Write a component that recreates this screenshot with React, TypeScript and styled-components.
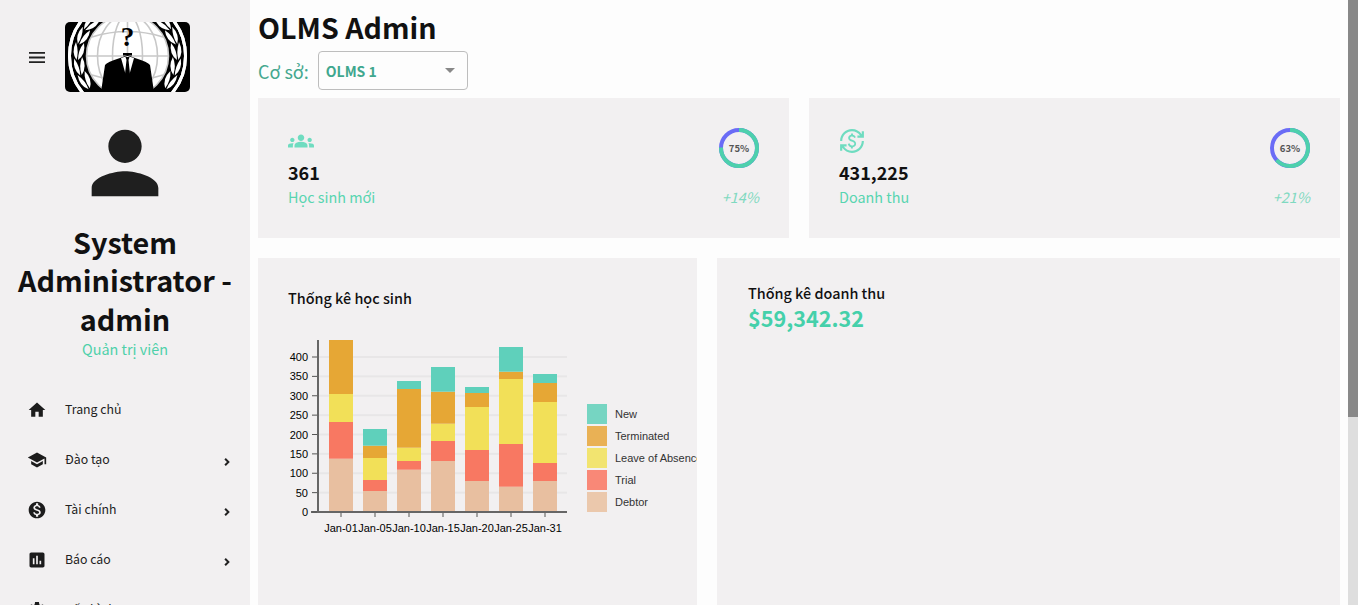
import styled, { createGlobalStyle } from "styled-components";

const FONT = `"Noto Sans CJK SC", "Noto Sans", sans-serif`;

const GlobalStyle = createGlobalStyle`
    html, body {
        margin: 0;
        height: 100%;
        overflow: hidden;
        background: #fdfdfd;
    }
    body {
        font-family: ${FONT};
        color: #111;
    }
`;

const Viewport = styled.div`
    display: flex;
    height: 100vh;
    overflow: hidden;
`;

const Layout = styled.div`
    display: flex;
    flex: 1;
    min-width: 0;
`;

const ScrollTrack = styled.div`
    flex: 0 0 10px;
    background: #dedede;
`;

const ScrollThumb = styled.div`
    height: 417px;
    background: #888;
`;

const Sidebar = styled.aside`
    flex: 0 0 250px;
    background: #f2f0f1;
`;

const SideHead = styled.div`
    display: flex;
    align-items: center;
    height: 70px;
    padding: 22px 0 0 29px;
    gap: 20px;
`;

const Burger = styled.svg`
    width: 16px;
    height: 11px;
    color: #222;
`;

const Logo = styled.svg`
    width: 125px;
    height: 70px;
    border-radius: 5px;
    display: block;
`;

const Profile = styled.div`
    display: flex;
    flex-direction: column;
    align-items: center;
    padding-top: 21px;
`;

const Name = styled.div`
    font-size: 28.8px;
    line-height: 38.4px;
    font-weight: 700;
    text-align: center;
    margin-top: 10px;
`;

const Role = styled.div`
    font-size: 14.4px;
    line-height: 22px;
    color: #4fd0aa;
`;

const Nav = styled.nav`
    padding-top: 25px;
`;

const NavItem = styled.div`
    display: flex;
    align-items: center;
    height: 50px;
    padding-left: 27px;
    font-size: 12.3px;
    color: #222;
`;

const NavIcon = styled.svg`
    flex: 0 0 20px;
    width: 20px;
    height: 20px;
    margin-right: 18px;
    color: #1c1c1c;
`;

const NavLabel = styled.span`
    flex: 1;
    margin-bottom: 2px;
`;

const Chevron = styled.svg`
    width: 6px;
    height: 8px;
    margin: 3px 20px 0 0;
    color: #222;
`;

const Main = styled.main`
    flex: 1;
    min-width: 0;
    padding: 0 8px;
`;

const Title = styled.h1`
    margin: 0;
    padding-top: 8px;
    font-size: 28.6px;
    line-height: 38px;
    font-weight: 700;
`;

const BranchRow = styled.div`
    display: flex;
    align-items: center;
    margin-top: 5px;
    gap: 9px;
    height: 39px;
`;

const BranchLabel = styled.span`
    font-size: 18px;
    color: #45a88f;
`;

const Select = styled.div`
    display: flex;
    align-items: center;
    justify-content: space-between;
    box-sizing: border-box;
    width: 150px;
    height: 39px;
    padding: 0 12px 0 7px;
    border: 1px solid #bdbdbd;
    border-radius: 4px;
    font-size: 14px;
    font-weight: 700;
    color: #40a78e;
`;

const Caret = styled.span`
    width: 0;
    height: 0;
    border-left: 5px solid transparent;
    border-right: 5px solid transparent;
    border-top: 5px solid #888;
`;

const StatRow = styled.div`
    display: grid;
    grid-template-columns: 531px 531px;
    gap: 20px;
    margin-top: 8px;
`;

const StatCard = styled.section`
    display: flex;
    justify-content: space-between;
    box-sizing: border-box;
    height: 140px;
    padding: 30px 29px 0 30px;
    background: #f2f0f1;
`;

const StatIcon = styled.svg`
    display: block;
    width: 26px;
    height: 26px;
    color: #6fdcc0;
`;

const StatValue = styled.div`
    font-size: 18px;
    line-height: 25px;
    font-weight: 700;
    margin-top: 6px;
`;

const StatLabel = styled.div`
    font-size: 14.4px;
    line-height: 24px;
    color: #58d5b0;
`;

const StatSide = styled.div`
    display: flex;
    flex-direction: column;
    align-items: flex-end;
`;

const Ring = styled.svg`
    display: block;
    width: 42px;
    height: 42px;
    margin-top: -1px;
`;

const RingText = styled.text`
    font-family: ${FONT};
    font-size: 9.5px;
    font-weight: 700;
    fill: #555;
`;

const Growth = styled.div`
    font-size: 14.4px;
    line-height: 22px;
    font-style: italic;
    color: #7fd9c0;
    margin: 17px 1px 0 0;
`;

const ChartRow = styled.div`
    display: grid;
    grid-template-columns: 439px 623px;
    gap: 20px;
    margin-top: 20px;
`;

const ChartCard = styled.section<{ $top: number; $left: number }>`
    box-sizing: border-box;
    height: 600px;
    padding: ${({ $top, $left }) => `${$top}px 0 0 ${$left}px`};
    background: #f2f0f1;
    overflow: hidden;
`;

const CardTitle = styled.div`
    font-size: 14.4px;
    line-height: 22px;
    font-weight: 500;
`;

const Amount = styled.div`
    font-size: 21.6px;
    line-height: 28px;
    font-weight: 700;
    color: #45d0aa;
`;

const ChartSvg = styled.svg`
    display: block;
    margin: 21px 0 0 -30px;
    font-family: "Liberation Sans", Arial, sans-serif;
`;

const LogoMark = styled.text`
    font-family: "Liberation Serif", serif;
    font-size: 27px;
    font-weight: 700;
`;

const stackColors = ["#e8bfa0", "#f87862", "#f2e058", "#e6a735", "#5fd0bb"];
const legendColors = ["#76d5c2", "#e9b155", "#f2e470", "#f98877", "#ebc8ac"];
const legendNames = ["New", "Terminated", "Leave of Absence", "Trial", "Debtor"];

// pixel heights measured off the chart, bottom segment first
const bars = [
    { label: "Jan-01", x: 71, tops: [458.7, 422, 394, 340, 340] },
    { label: "Jan-05", x: 105, tops: [491, 480, 458, 445.7, 429] },
    { label: "Jan-10", x: 139, tops: [469.7, 461, 447.7, 389, 381] },
    { label: "Jan-15", x: 173, tops: [461, 441, 423.7, 391.7, 367] },
    { label: "Jan-20", x: 207, tops: [481, 450, 407, 393, 387] },
    { label: "Jan-25", x: 241, tops: [486.7, 444, 379, 371.7, 347] },
    { label: "Jan-31", x: 275, tops: [481, 463, 402, 383, 374] },
];

// svg starts at page y=330 and x=258
const OY = 330;
const ZERO = 512 - OY;
const ticks = [0, 50, 100, 150, 200, 250, 300, 350, 400];

function StudentChart() {
    return (
        <ChartSvg width="439" height="230" viewBox="0 0 439 230">
            {ticks.slice(1).map((t) => (
                <rect key={t} x="60" y={ZERO - t * 0.3875 - 1} width="249" height="2" fill="#e8e6e7" />
            ))}
            {bars.map((b) => (
                <g key={b.label}>
                    {b.tops.map((top, i) => {
                        const bottom = i === 0 ? 512 : b.tops[i - 1];
                        return (
                            <rect
                                key={i}
                                x={b.x}
                                y={top - OY}
                                width="24"
                                height={bottom - top}
                                fill={stackColors[i]}
                            />
                        );
                    })}
                    <rect x={b.x + 11.5} y={ZERO} width="1" height="5" fill="#555" />
                    <text x={b.x + 12} y={ZERO + 20} fontSize="11" textAnchor="middle" fill="#000">
                        {b.label}
                    </text>
                </g>
            ))}
            <rect x="59" y="10" width="2" height={ZERO - 9} fill="#666" />
            <rect x="53" y={ZERO - 1} width="256" height="2" fill="#666" />
            {ticks.map((t) => (
                <g key={t}>
                    <rect x="54" y={ZERO - t * 0.3875 - 0.5} width="5" height="1" fill="#555" />
                    <text x="50" y={ZERO - t * 0.3875 + 4} fontSize="11" textAnchor="end" fill="#000">
                        {t}
                    </text>
                </g>
            ))}
            {legendNames.map((name, i) => (
                <g key={name}>
                    <rect x="329" y={74 + i * 22} width="20" height="20" fill={legendColors[i]} />
                    <text x="357" y={88 + i * 22} fontSize="11" fill="#333">
                        {name}
                    </text>
                </g>
            ))}
        </ChartSvg>
    );
}

function ProgressRing({ value }: { value: number }) {
    const r = 18;
    const c = 2 * Math.PI * r;
    return (
        <Ring viewBox="0 0 42 42">
            <circle cx="21" cy="21" r={r} fill="none" stroke="#6a6cf6" strokeWidth="4" />
            <circle
                cx="21"
                cy="21"
                r={r}
                fill="none"
                stroke="#4dd0ac"
                strokeWidth="4"
                strokeDasharray={`${(c * value) / 100} ${c}`}
                transform="rotate(-90 21 21)"
            />
            <RingText x="21" y="24.5" textAnchor="middle">
                {value}%
            </RingText>
        </Ring>
    );
}

// one half of the wreath, the other half is mirrored around the globe centre
function Wreath() {
    const angles = [-36, -18, 0, 18, 36];
    return (
        <g>
            <circle cx="62.5" cy="34" r="58" fill="none" stroke="#fff" strokeWidth="3" />
            {angles.map((a) => (
                <g key={a} transform={`rotate(${a} 62.5 34)`} fill="#fff">
                    <path d="M11.5 38Q6 30 11 20Q14 30 11.5 38Z" />
                    <path d="M13 38Q21 32 19 21Q13 28 13 38Z" />
                </g>
            ))}
        </g>
    );
}

function AnonLogo() {
    return (
        <Logo viewBox="0 0 125 70">
            <rect width="125" height="70" fill="#000" />
            <Wreath />
            <g transform="matrix(-1 0 0 1 125 0)">
                <Wreath />
            </g>
            <circle cx="62.5" cy="34" r="41" fill="#fff" />
            <g fill="none" stroke="#c8c8c8" strokeWidth="1.6">
                <circle cx="62.5" cy="34" r="41" />
                <ellipse cx="62.5" cy="34" rx="15" ry="41" />
                <ellipse cx="62.5" cy="34" rx="30" ry="41" />
                <path d="M62.5 -7V75M21.5 34H103.5M27 15Q62.5 4 98 15M27 53Q62.5 64 98 53" />
            </g>
            <path d="M36 70L40 43Q42 40 55 36L62.5 33L70 36Q83 40 85 43L89 70Z" fill="#000" />
            <path d="M56 36L62.5 34L69 36L64.5 52H60.5Z" fill="#fff" />
            <path d="M60.5 35H64.5L63.5 38L65 52L62.5 56L60 52L61.5 38Z" fill="#000" />
            <rect x="58" y="31" width="9" height="2.5" fill="#000" />
            <LogoMark x="62.5" y="24" textAnchor="middle" fill="#000">
                ?
            </LogoMark>
        </Logo>
    );
}

const navIcons: Record<string, string> = {
    home: "M10 20v-6h4v6h5v-8h3L12 3 2 12h3v8z",
    school: "M5 13.18v4L12 21l7-3.82v-4L12 17l-7-3.82zM12 3 1 9l11 6 9-4.91V17h2V9L12 3z",
    money:
        "M12 2C6.48 2 2 6.48 2 12s4.48 10 10 10 10-4.48 10-10S17.52 2 12 2zm1.41 16.09V20h-2.67v-1.93c-1.71-.36-3.16-1.46-3.27-3.4h1.96c.1 1.05.82 1.87 2.65 1.87 1.96 0 2.4-.98 2.4-1.59 0-.83-.44-1.61-2.67-2.14-2.48-.6-4.18-1.62-4.18-3.67 0-1.72 1.39-2.84 3.11-3.21V4h2.67v1.95c1.86.45 2.79 1.86 2.85 3.39H14.3c-.05-1.11-.64-1.87-2.22-1.87-1.5 0-2.4.68-2.4 1.64 0 .84.65 1.39 2.67 1.91s4.18 1.39 4.18 3.91c-.01 1.83-1.38 2.83-3.12 3.16z",
    chart:
        "M19 3H5c-1.1 0-2 .9-2 2v14c0 1.1.9 2 2 2h14c1.1 0 2-.9 2-2V5c0-1.1-.9-2-2-2zM9 17H7v-7h2v7zm4 0h-2V7h2v10zm4 0h-2v-4h2v4z",
    settings:
        "M19.14 12.94c.04-.3.06-.61.06-.94 0-.32-.02-.64-.07-.94l2.03-1.58c.18-.14.23-.41.12-.61l-1.92-3.32c-.12-.22-.37-.29-.59-.22l-2.39.96c-.5-.38-1.03-.7-1.62-.94l-.36-2.54c-.04-.24-.24-.41-.48-.41h-3.84c-.24 0-.43.17-.47.41l-.36 2.54c-.59.24-1.13.57-1.62.94l-2.39-.96c-.22-.08-.47 0-.59.22L2.74 8.87c-.12.21-.08.47.12.61l2.03 1.58c-.05.3-.09.63-.09.94s.02.64.07.94l-2.03 1.58c-.18.14-.23.41-.12.61l1.92 3.32c.12.22.37.29.59.22l2.39-.96c.5.38 1.03.7 1.62.94l.36 2.54c.05.24.24.41.48.41h3.84c.24 0 .44-.17.47-.41l.36-2.54c.59-.24 1.13-.56 1.62-.94l2.39.96c.22.08.47 0 .59-.22l1.92-3.32c.12-.22.07-.47-.12-.61l-2.01-1.58zM12 15.6c-1.98 0-3.6-1.62-3.6-3.6s1.62-3.6 3.6-3.6 3.6 1.62 3.6 3.6-1.62 3.6-3.6 3.6z",
};

const navItems = [
    { label: "Trang chủ", icon: "home", sub: false },
    { label: "Đào tạo", icon: "school", sub: true },
    { label: "Tài chính", icon: "money", sub: true },
    { label: "Báo cáo", icon: "chart", sub: true },
    { label: "Cấu hình", icon: "settings", sub: true },
];

export default function App() {
    return (
        <Viewport>
            <GlobalStyle />
            <Layout>
                <Sidebar>
                    <SideHead>
                        <Burger viewBox="0 0 16 11">
                            <path d="M0 0h16v1.8H0zM0 4.6h16v1.8H0zM0 9.2h16V11H0z" fill="currentColor" />
                        </Burger>
                        <AnonLogo />
                    </SideHead>
                    <Profile>
                        <svg width="100" height="100" viewBox="0 0 24 24">
                            <path
                                d="M12 12c2.21 0 4-1.79 4-4s-1.79-4-4-4-4 1.79-4 4 1.79 4 4 4zm0 2c-2.67 0-8 1.34-8 4v2h16v-2c0-2.66-5.33-4-8-4z"
                                fill="#1f1f1f"
                            />
                        </svg>
                        <Name>
                            System
                            <br />
                            Administrator -
                            <br />
                            admin
                        </Name>
                        <Role>Quản trị viên</Role>
                    </Profile>
                    <Nav>
                        {navItems.map((item) => (
                            <NavItem key={item.label}>
                                <NavIcon viewBox="0 0 24 24">
                                    <path d={navIcons[item.icon]} fill="currentColor" />
                                </NavIcon>
                                <NavLabel>{item.label}</NavLabel>
                                {item.sub && (
                                    <Chevron viewBox="0 0 6 8">
                                        <path d="M1.8 0L0.4 1.4 3 4 0.4 6.6 1.8 8l4-4z" fill="currentColor" />
                                    </Chevron>
                                )}
                            </NavItem>
                        ))}
                    </Nav>
                </Sidebar>
                <Main>
                    <Title>OLMS Admin</Title>
                    <BranchRow>
                        <BranchLabel>Cơ sở:</BranchLabel>
                        <Select>
                            OLMS 1
                            <Caret />
                        </Select>
                    </BranchRow>
                    <StatRow>
                        <StatCard>
                            <div>
                                <StatIcon viewBox="0 0 24 24">
                                    <path
                                        d="M12 12.75c1.63 0 3.07.39 4.24.9 1.08.48 1.76 1.56 1.76 2.73V18H6v-1.61c0-1.18.68-2.26 1.76-2.73 1.17-.52 2.61-.91 4.24-.91zM4 13c1.1 0 2-.9 2-2s-.9-2-2-2-2 .9-2 2 .9 2 2 2zm1.13 1.1C4.76 14.04 4.39 14 4 14c-.99 0-1.93.21-2.78.58C.48 14.9 0 15.62 0 16.43V18h4.5v-1.61c0-.83.23-1.61.63-2.29zM20 13c1.1 0 2-.9 2-2s-.9-2-2-2-2 .9-2 2 .9 2 2 2zm4 3.43c0-.81-.48-1.53-1.22-1.85-.85-.37-1.79-.58-2.78-.58-.39 0-.76.04-1.13.1.4.68.63 1.46.63 2.29V18H24v-1.57zM12 6c1.66 0 3 1.34 3 3s-1.34 3-3 3-3-1.34-3-3 1.34-3 3-3z"
                                        fill="currentColor"
                                    />
                                </StatIcon>
                                <StatValue>361</StatValue>
                                <StatLabel>Học sinh mới</StatLabel>
                            </div>
                            <StatSide>
                                <ProgressRing value={75} />
                                <Growth>+14%</Growth>
                            </StatSide>
                        </StatCard>
                        <StatCard>
                            <div>
                                <StatIcon viewBox="0 0 24 24">
                                    <path
                                        d="M12.89 11.1c-1.78-.59-2.64-.96-2.64-1.9 0-1.02 1.11-1.39 1.81-1.39 1.31 0 1.79.99 1.9 1.34l1.58-.67c-.15-.44-.82-1.91-2.66-2.23V5h-1.75v1.26c-2.6.56-2.62 2.85-2.62 2.96 0 2.27 2.25 2.91 3.35 3.31 1.58.56 2.28 1.07 2.28 2.03 0 1.13-1.05 1.61-1.98 1.61-1.82 0-2.34-1.87-2.4-2.09l-1.66.67c.63 2.19 2.28 2.78 2.9 2.96V19h1.75v-1.24c.52-.09 3.02-.59 3.02-3.22.01-1.39-.6-2.61-2.88-3.44zM3 21H1v-6h6v2H4.52c1.61 2.41 4.36 4 7.48 4 4.97 0 9-4.03 9-9h2c0 6.08-4.92 11-11 11-3.72 0-7.01-1.85-9-4.67V21zm-2-9C1 5.92 5.92 1 12 1c3.72 0 7.01 1.85 9 4.67V3h2v6h-6V7h2.48C17.87 4.59 15.12 3 12 3c-4.97 0-9 4.03-9 9H1z"
                                        fill="currentColor"
                                    />
                                </StatIcon>
                                <StatValue>431,225</StatValue>
                                <StatLabel>Doanh thu</StatLabel>
                            </div>
                            <StatSide>
                                <ProgressRing value={63} />
                                <Growth>+21%</Growth>
                            </StatSide>
                        </StatCard>
                    </StatRow>
                    <ChartRow>
                        <ChartCard $top={29} $left={30}>
                            <CardTitle>Thống kê học sinh</CardTitle>
                            <StudentChart />
                        </ChartCard>
                        <ChartCard $top={24} $left={31}>
                            <CardTitle>Thống kê doanh thu</CardTitle>
                            <Amount>$59,342.32</Amount>
                        </ChartCard>
                    </ChartRow>
                </Main>
            </Layout>
            <ScrollTrack>
                <ScrollThumb />
            </ScrollTrack>
        </Viewport>
    );
}
